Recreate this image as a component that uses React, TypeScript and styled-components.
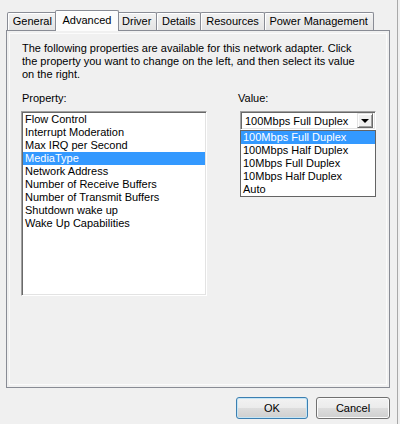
import React from 'react';
import styled, { createGlobalStyle } from 'styled-components';

const GlobalStyle = createGlobalStyle`
	html, body {
		margin: 0;
		padding: 0;
		background: #f0f0f0;
	}
	body {
		font-family: "Liberation Sans", Arial, sans-serif;
		font-size: 11px;
		color: #000;
	}
`;

const properties = [
	'Flow Control',
	'Interrupt Moderation',
	'Max IRQ per Second',
	'MediaType',
	'Network Address',
	'Number of Receive Buffers',
	'Number of Transmit Buffers',
	'Shutdown wake up',
	'Wake Up Capabilities',
];

const mediaTypes = [
	'100Mbps Full Duplex',
	'100Mbps Half Duplex',
	'10Mbps Full Duplex',
	'10Mbps Half Duplex',
	'Auto',
];

const tabs = ['General', 'Advanced', 'Driver', 'Details', 'Resources', 'Power Management'];

const StyledWindow = styled.div`
	width: 400px;
	height: 424px;
	display: flex;
	background: #f0f0f0;
	overflow: hidden;
`;
const StyledDialog = styled.div`
	width: 398px;
	height: 424px;
	box-sizing: border-box;
	border-right: 1px solid #a9a9a9;
	padding: 10px 0 0 6px;
	display: flex;
	flex-direction: column;
`;
const StyledTabStrip = styled.div`
	height: 20px;
	display: flex;
	align-items: flex-end;
	padding-left: 2px;
`;
const StyledTab = styled.div<{ $active?: boolean }>`
	box-sizing: border-box;
	height: ${(p) => (p.$active ? 21 : 18)}px;
	margin: 0 ${(p) => (p.$active ? -2 : 0)}px ${(p) => (p.$active ? -1 : 0)}px
		${(p) => (p.$active ? -3 : -1)}px;
	padding: 0 ${(p) => (p.$active ? 6.8 : 4.8)}px;
	border: 1px solid #898c95;
	border-bottom: none;
	border-radius: 2px 2px 0 0;
	background: ${(p) => (p.$active ? '#fcfcfc' : 'linear-gradient(#f2f2f2, #e4e4e4)')};
	box-shadow: inset 1px 1px 0 #fff;
	line-height: ${(p) => (p.$active ? 19 : 16)}px;
	white-space: nowrap;
	position: relative;
	z-index: ${(p) => (p.$active ? 2 : 1)};
`;
const StyledPanel = styled.div`
	width: 384px;
	height: 358px;
	box-sizing: border-box;
	border: 1px solid #898c95;
	box-shadow: inset 0 0 0 2px #f0f0f0, inset 0 0 0 3px #fbfbfb;
	padding: 11px 0 0 14px;
`;
const StyledDescription = styled.p`
	margin: 0 0 11px 1px;
	line-height: 13px;
	white-space: nowrap;
`;
const StyledColumns = styled.div`
	display: flex;
	gap: 30px;
`;
const StyledColumn = styled.div<{ $width: number }>`
	width: ${(p) => p.$width}px;
	position: relative;
`;
const StyledFieldLabel = styled.div`
	line-height: 13px;
	margin: 0 0 6px 1px;
`;
const StyledListBox = styled.div`
	width: 186px;
	height: 185px;
	box-sizing: border-box;
	background: #fff;
	border: 1px solid;
	border-color: #a0a0a0 #fff #fff #a0a0a0;
	box-shadow: inset 1px 1px 0 #696969, inset -1px -1px 0 #e3e3e3;
	padding: 1px;
`;
const StyledRow = styled.div<{ $selected?: boolean }>`
	height: 13px;
	line-height: 13px;
	padding-left: 2px;
	white-space: nowrap;
	background: ${(p) => (p.$selected ? '#3399ff' : 'transparent')};
	color: ${(p) => (p.$selected ? '#fff' : '#000')};
`;
const StyledCombo = styled.div`
	margin-left: 3px;
	width: 136px;
	height: 19px;
	box-sizing: border-box;
	background: #fff;
	border: 1px solid;
	border-color: #a0a0a0 #fff #fff #a0a0a0;
	box-shadow: inset 1px 1px 0 #696969, inset -1px -1px 0 #e3e3e3;
	display: flex;
	align-items: center;
	padding: 0 2px 0 4px;
`;
const StyledComboText = styled.span`
	flex: 1;
	white-space: nowrap;
`;
const StyledDropButton = styled.div`
	width: 16px;
	height: 15px;
	box-sizing: border-box;
	background: #f0f0f0;
	border: 1px solid;
	border-color: #e3e3e3 #696969 #696969 #e3e3e3;
	box-shadow: inset 1px 1px 0 #fff, inset -1px -1px 0 #a0a0a0;
	display: flex;
	align-items: center;
	justify-content: center;
	&::after {
		content: '';
		border-left: 4px solid transparent;
		border-right: 4px solid transparent;
		border-top: 4px solid #000;
		margin-top: 1px;
	}
`;
const StyledDropList = styled.div`
	position: absolute;
	left: 3px;
	top: 38px;
	width: 136px;
	box-sizing: border-box;
	background: #fff;
	border: 1px solid #646464;
	z-index: 3;
`;
const StyledFooter = styled.div`
	display: flex;
	justify-content: flex-end;
	gap: 8px;
	padding: 9px 7px 0 0;
`;
const StyledButton = styled.button<{ $default?: boolean; $width: number }>`
	width: ${(p) => p.$width}px;
	height: 22px;
	padding: 0;
	font-family: "Liberation Sans", Arial, sans-serif;
	font-size: 11px;
	color: #000;
	border: 1px solid ${(p) => (p.$default ? '#3c7fb1' : '#707070')};
	border-radius: 3px;
	background: linear-gradient(#f2f2f2 0%, #ebebeb 50%, #dddddd 51%, #cfcfcf 100%);
	box-shadow: inset 0 0 0 1px ${(p) => (p.$default ? '#c4e5f6' : '#fbfbfb')};
`;

const App: React.FC = () => {
	return (
		<StyledWindow>
			<GlobalStyle />
			<StyledDialog>
				<StyledTabStrip>
					{tabs.map((t) => (
						<StyledTab key={t} $active={t === 'Advanced'}>
							{t}
						</StyledTab>
					))}
				</StyledTabStrip>
				<StyledPanel>
					<StyledDescription>
						The following properties are available for this network adapter. Click
						<br />
						the property you want to change on the left, and then select its value
						<br />
						on the right.
					</StyledDescription>
					<StyledColumns>
						<StyledColumn $width={186}>
							<StyledFieldLabel>Property:</StyledFieldLabel>
							<StyledListBox>
								{properties.map((p) => (
									<StyledRow key={p} $selected={p === 'MediaType'}>
										{p}
									</StyledRow>
								))}
							</StyledListBox>
						</StyledColumn>
						<StyledColumn $width={139}>
							<StyledFieldLabel>Value:</StyledFieldLabel>
							<StyledCombo>
								<StyledComboText>100Mbps Full Duplex</StyledComboText>
								<StyledDropButton />
							</StyledCombo>
							<StyledDropList>
								{mediaTypes.map((m, i) => (
									<StyledRow key={m} $selected={i === 0}>
										{m}
									</StyledRow>
								))}
							</StyledDropList>
						</StyledColumn>
					</StyledColumns>
				</StyledPanel>
				<StyledFooter>
					<StyledButton $default $width={72}>
						OK
					</StyledButton>
					<StyledButton $width={74}>Cancel</StyledButton>
				</StyledFooter>
			</StyledDialog>
		</StyledWindow>
	);
};

export default App;
